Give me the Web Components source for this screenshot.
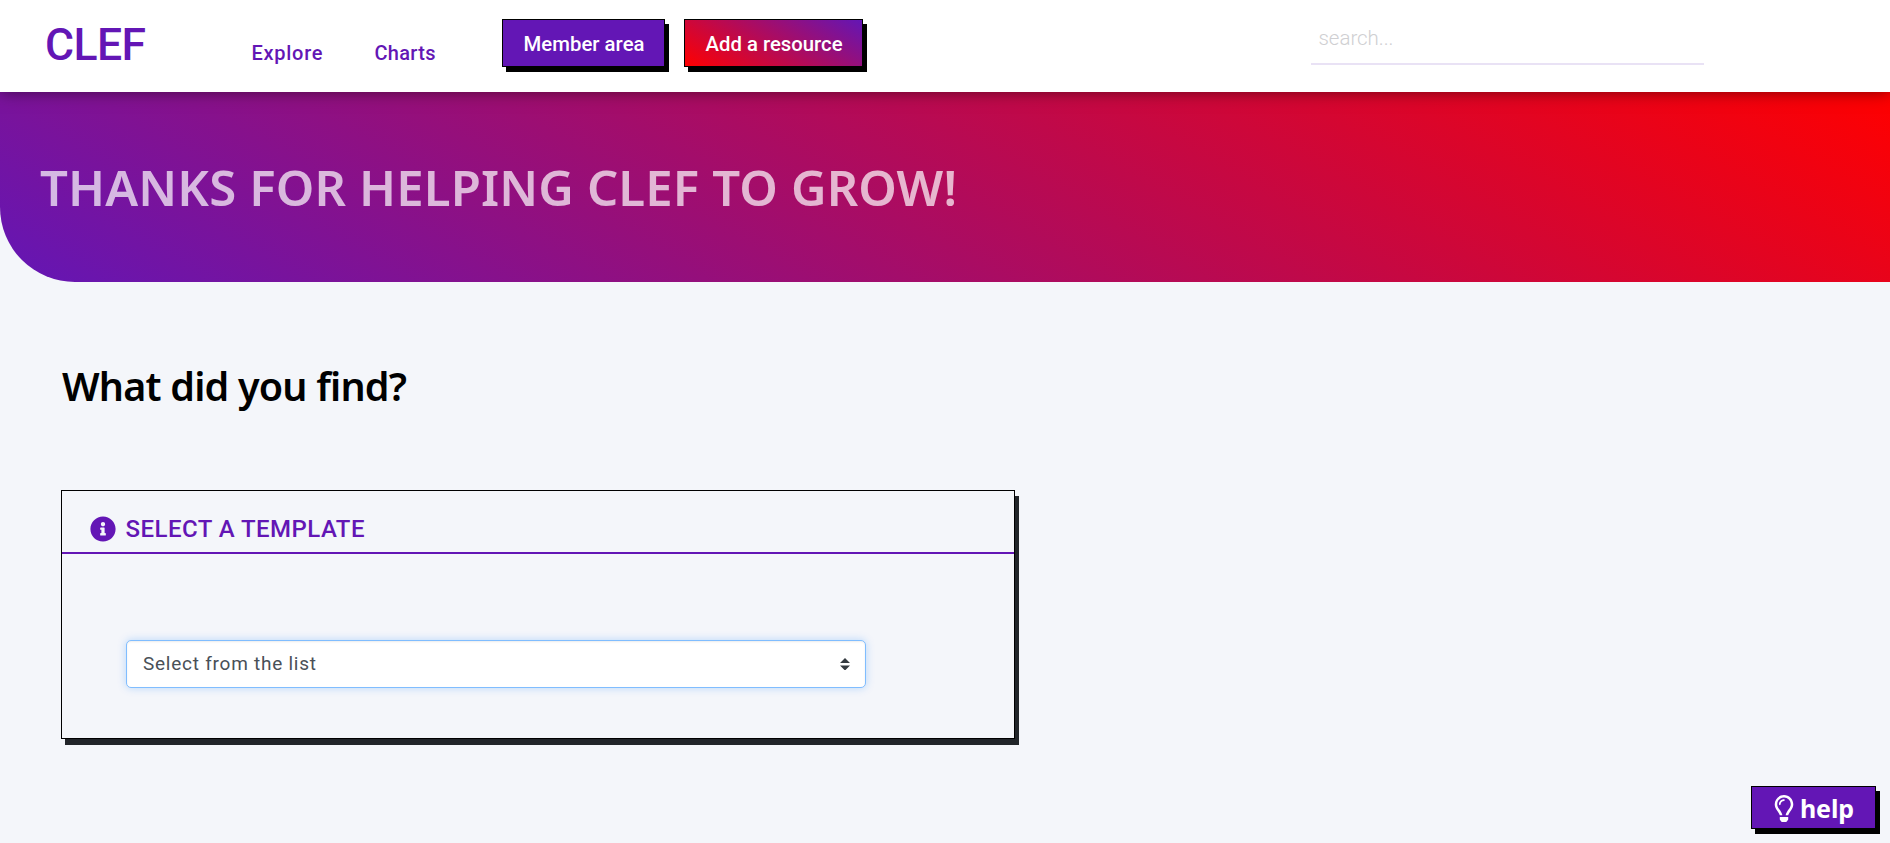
<!DOCTYPE html>
<html lang="en">
<head>
<meta charset="utf-8">
<title>CLEF</title>
<style>
html,body{margin:0;height:100%;background:#f4f6fa}
body{font-family:Roboto,"Noto Sans",sans-serif;overflow:hidden;--accent:#6316b5}
</style>
</head>
<body>
<clef-page></clef-page>
<script>
const define=(name,html,setup)=>{
  const t=document.createElement('template');
  t.innerHTML=html;
  customElements.define(name,class extends HTMLElement{
    constructor(){super();this.attachShadow({mode:'open'}).append(t.content.cloneNode(true))}
    connectedCallback(){if(setup)setup(this)}
  });
};

// One-line label whose tracking is adjusted to fill its width attribute.
define('fit-text',`<style>:host{display:block;white-space:nowrap;flex:none}span{display:inline-block}</style><span><slot></slot></span>`,el=>{
  const s=el.shadowRoot.querySelector('span'),w=+el.getAttribute('width');
  el.style.width=w+'px';
  const n=el.textContent.length;
  s.style.letterSpacing=((w-s.getBoundingClientRect().width)/(n-1))+'px';
});

define('clef-button',`<style>
:host{display:flex;box-sizing:border-box;height:48px;border:1px solid #000;background:var(--accent);box-shadow:4px 5px 0 #000;color:#fff;font-size:20.3px;font-weight:500;line-height:49px;padding-left:20.5px}
:host([hot]){background:linear-gradient(30deg,#f00,var(--accent))}
</style><slot></slot>`);

define('clef-header',`<style>
:host{display:flex;align-items:flex-start;box-sizing:border-box;height:92px;background:#fff;position:relative;z-index:1;box-shadow:0 0 15px rgba(0,0,0,.5);color:var(--accent);padding-left:45px}
.logo{font-size:44.5px;font-weight:500;line-height:62px;margin-top:14px}
nav{display:flex;gap:52px;margin:33px 0 0 105.5px;font-size:20px;font-weight:500;line-height:40px}
.actions{display:flex;gap:19px;margin:19px 0 0 66.5px}
.m{width:163px}.r{width:179px}
.search{box-sizing:border-box;width:393px;height:53px;margin:12px 0 0 448px;border-bottom:2px solid #e9e2f5;padding-left:7.5px;color:#cfcfd2;font-size:20.5px;font-weight:300;line-height:52px}
</style>
<fit-text class="logo" width="101">CLEF</fit-text>
<nav><fit-text width="71">Explore</fit-text><fit-text width="61">Charts</fit-text></nav>
<div class="actions"><clef-button class="m"><fit-text width="121">Member area</fit-text></clef-button>
<clef-button class="r" hot><fit-text width="137">Add a resource</fit-text></clef-button></div>
<div class="search"><fit-text width="75">search...</fit-text></div>`);

define('clef-hero',`<style>
:host{display:block;box-sizing:border-box;height:190px;border-bottom-left-radius:75px;background:linear-gradient(30deg,var(--accent),#f00);padding:62px 0 0 40px}
h1{margin:0;font:600 49px/66px "Noto Sans",sans-serif;color:rgba(255,255,255,.7)}
</style><h1><fit-text width="917">THANKS FOR HELPING CLEF TO GROW!</fit-text></h1>`);

define('info-icon',`<style>:host{display:block;width:26px;height:26px;flex:none}svg{display:block}</style>
<svg width="26" height="26" viewBox="0 0 512 512"><path fill="#6316b5" d="M256 8C119.043 8 8 119.083 8 256c0 136.997 111.043 248 248 248s248-111.003 248-248C504 119.083 392.957 8 256 8zm0 110c23.196 0 42 18.804 42 42s-18.804 42-42 42-42-18.804-42-42 18.804-42 42-42zm56 254c0 6.627-5.373 12-12 12h-88c-6.627 0-12-5.373-12-12v-24c0-6.627 5.373-12 12-12h12v-64h-12c-6.627 0-12-5.373-12-12v-24c0-6.627 5.373-12 12-12h64c6.627 0 12 5.373 12 12v100h12c6.627 0 12 5.373 12 12v24z"/></svg>`);

define('template-select',`<style>
:host{display:flex;align-items:center;justify-content:space-between;box-sizing:border-box;width:740px;height:48px;border:1px solid #80bdff;border-radius:5px;background:#fff;box-shadow:0 0 8px rgba(0,123,255,.25),inset 0 1px 2px rgba(0,0,0,.075);color:#495057;font:400 19px/46px Roboto,sans-serif;padding:0 15px 0 16px}
svg{display:block}
</style><fit-text width="173">Select from the list</fit-text>
<svg width="10" height="12.5" viewBox="0 0 4 5"><path fill="#343a40" d="M2 0L0 2h4zm0 5L0 3h4z"/></svg>`);

define('template-card',`<style>
:host{display:block;box-sizing:border-box;width:954px;height:249px;border:1px solid #000;box-shadow:4px 6px 0 #212529}
header{display:flex;align-items:center;gap:9.5px;box-sizing:border-box;height:63px;border-bottom:2px solid var(--accent);padding:14px 0 0 28px;color:var(--accent);font:500 24px/34px Roboto,sans-serif}
template-select{margin:86px 0 0 64px}
</style><header><info-icon></info-icon><fit-text width="239">SELECT A TEMPLATE</fit-text></header>
<template-select></template-select>`);

define('help-button',`<style>
:host{position:absolute;left:1751px;top:786px;display:flex;box-sizing:border-box;width:125px;height:43px;border:1px solid #000;background:var(--accent);box-shadow:4px 5px 0 #000;color:#fff;font:700 25px/44px "Noto Sans",sans-serif;padding-left:22px;gap:6px}
svg{display:block;margin-top:8px}
fit-text{line-height:44px;margin-top:-1px}
</style><svg width="20" height="27" viewBox="0 0 352 512"><path fill="#fff" d="M176 80c-52.94 0-96 43.06-96 96 0 8.84 7.16 16 16 16s16-7.16 16-16c0-35.3 28.72-64 64-64 8.84 0 16-7.16 16-16s-7.16-16-16-16zM96.060 459.170c0 3.150.930 6.220 2.680 8.840l24.510 36.840c2.970 4.460 7.970 7.140 13.320 7.140h78.850c5.360 0 10.360-2.680 13.320-7.140l24.510-36.840c1.740-2.620 2.670-5.700 2.680-8.840l.050-43.180H96.020l.040 43.180zM176 0C73.720 0 0 82.970 0 176c0 44.370 16.450 84.850 43.560 115.780 16.640 18.990 42.740 58.800 52.420 92.160v.06h48v-.12c-.010-4.770-.720-9.510-2.150-14.070-5.590-17.810-22.820-64.770-62.170-109.670-20.540-23.430-31.520-53.150-31.610-84.140-.2-73.640 59.670-128 127.950-128 70.580 0 128 57.420 128 128 0 30.970-11.240 60.850-31.650 84.140-39.110 44.610-56.420 91.470-62.100 109.460a47.507 47.507 0 0 0-2.220 14.300v.1h48v-.05c9.680-33.370 35.780-73.180 52.420-92.160C335.550 260.850 352 220.370 352 176 352 78.800 273.200 0 176 0z"/></svg><fit-text width="54">help</fit-text>`);

define('clef-page',`<style>
:host{display:block;position:relative;height:843px;background:#f4f6fa}
main{padding:78px 0 0 61px}
h2{margin:0;font:600 39.5px/52px "Noto Sans",sans-serif;color:#000}
template-card{margin-top:78px}
h2 fit-text{margin-left:1px}
</style><clef-header></clef-header><clef-hero></clef-hero>
<main><h2><fit-text width="345">What did you find?</fit-text></h2><template-card></template-card></main>
<help-button></help-button>`);
</script>
</body>
</html>
